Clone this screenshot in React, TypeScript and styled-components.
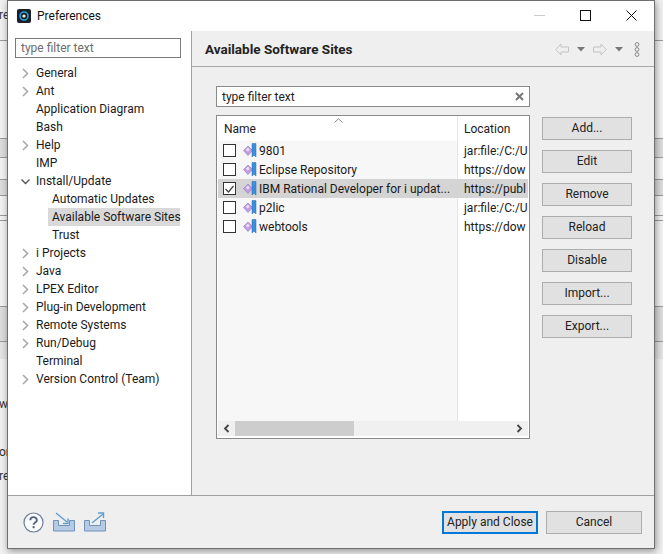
import React from "react";
import styled, { createGlobalStyle } from "styled-components";

const GlobalStyle = createGlobalStyle`
  html, body {
    margin: 0;
    padding: 0;
    background: #f0f0f0;
    overflow: hidden;
  }
  body {
    font-family: Roboto, "Noto Sans", sans-serif;
    font-size: 12px;
    color: #1a1a1a;
  }
`;

const Desktop = styled.div`
  position: relative;
  width: 663px;
  height: 554px;
  overflow: hidden;
  background: #f0f0f0;
`;

const BackdropText = styled.span<{ $top: number }>`
  position: absolute;
  left: -1px;
  top: ${(p) => p.$top}px;
  font-size: 12px;
  color: #333;
`;

const BackdropBand = styled.div<{ $top: number; $height: number; $color: string }>`
  position: absolute;
  left: 0;
  right: 0;
  top: ${(p) => p.$top}px;
  height: ${(p) => p.$height}px;
  background: ${(p) => p.$color};
  border-top: 1px solid #9a9a9a;
`;

const Dialog = styled.div`
  position: absolute;
  left: 7px;
  top: 0;
  width: 646px;
  height: 547px;
  display: flex;
  flex-direction: column;
  background: #efefef;
  border: 1px solid #6f6f6f;
  box-shadow: 1px 2px 7px rgba(0, 0, 0, 0.4);
`;

const TitleBar = styled.div`
  height: 30px;
  flex: none;
  display: flex;
  align-items: center;
  background: #fff;
  padding-left: 9px;
  gap: 6px;
`;

const TitleText = styled.span`
  font-size: 12px;
  color: #111;
`;

const WindowButtons = styled.div`
  margin-left: auto;
  display: flex;
  height: 100%;
  padding-bottom: 2px;
  box-sizing: border-box;
`;

const WindowButton = styled.div`
  width: 46px;
  display: flex;
  align-items: center;
  justify-content: center;
`;

const Body = styled.div`
  flex: 1;
  min-height: 0;
  display: flex;
`;

const Sidebar = styled.div`
  width: 176px;
  flex: none;
  background: #fff;
  border-right: 1px solid #a0a0a0;
  padding: 7px 0 0 7px;
`;

const SidebarFilter = styled.div`
  width: 166px;
  height: 20px;
  box-sizing: border-box;
  border: 1px solid #7a7a7a;
  background: #fff;
  color: #6d6d6d;
  line-height: 18px;
  padding-left: 5px;
  margin-bottom: 6px;
`;

const TreeRow = styled.div<{ $depth?: number }>`
  height: 18px;
  line-height: 18px;
  display: flex;
  align-items: center;
  white-space: nowrap;
  margin-left: ${(p) => (p.$depth ? 33 : 0)}px;
`;

const TreeLabel = styled.span<{ $selected?: boolean; $depth?: number }>`
  display: block;
  flex: ${(p) => (p.$depth ? "none" : "initial")};
  width: ${(p) => (p.$depth ? "132px" : "auto")};
  box-sizing: border-box;
  padding-left: ${(p) => (p.$depth ? 4 : 0)}px;
  background: ${(p) => (p.$selected ? "#d9d9d9" : "transparent")};
`;

const Twisty = styled.span`
  width: 21px;
  flex: none;
  display: flex;
  justify-content: center;
`;

const Main = styled.div`
  flex: 1;
  min-width: 0;
  display: flex;
  flex-direction: column;
`;

const PageHeader = styled.div`
  height: 36px;
  flex: none;
  box-sizing: border-box;
  border-bottom: 1px solid #a8a8a8;
  display: flex;
  align-items: center;
  padding: 1px 14px 0 13px;
`;

const PageTitle = styled.span`
  font-size: 13.5px;
  font-weight: 700;
  color: #222;
  line-height: 18px;
`;

const HeaderTools = styled.div`
  margin-left: auto;
  display: flex;
  align-items: center;
  gap: 8px;
`;

const Content = styled.div`
  flex: 1;
  min-height: 0;
  padding: 19px 0 0 24px;
  display: flex;
  flex-direction: column;
`;

const TableFilter = styled.div`
  width: 314px;
  height: 21px;
  box-sizing: border-box;
  border: 1px solid #8a8a8a;
  background: #fff;
  padding: 0 5px;
  display: flex;
  align-items: center;
  justify-content: space-between;
  color: #222;
  margin-bottom: 8px;
`;

const TableArea = styled.div`
  display: flex;
  gap: 12px;
`;

const Table = styled.div`
  width: 314px;
  height: 324px;
  box-sizing: border-box;
  border: 1px solid #8a8a8a;
  background: #fff;
  display: flex;
  flex-direction: column;
`;

const TableBody = styled.div`
  flex: 1;
  min-height: 0;
  display: grid;
  grid-template-columns: 240px 1fr;
  grid-template-rows: 25px repeat(5, 19px) 1fr;
  overflow: hidden;
`;

const HeaderCell = styled.div<{ $first?: boolean }>`
  position: relative;
  line-height: 26px;
  padding-left: ${(p) => (p.$first ? 7 : 6)}px;
  border-left: ${(p) => (p.$first ? "none" : "1px solid #e6e6e6")};
`;

const SortCaret = styled.svg`
  position: absolute;
  left: 117px;
  top: 2px;
`;

const NameCell = styled.div<{ $selected?: boolean }>`
  display: flex;
  align-items: center;
  padding-left: 5px;
  margin-left: 1px;
  background: ${(p) => (p.$selected ? "#d4d4d4" : "#f7f7f7")};
  white-space: nowrap;
  overflow: hidden;
`;

const LocationCell = styled.div<{ $selected?: boolean }>`
  display: flex;
  align-items: center;
  padding-left: 6px;
  border-left: 1px solid ${(p) => (p.$selected ? "#d4d4d4" : "#e6e6e6")};
  background: ${(p) => (p.$selected ? "#d4d4d4" : "#fff")};
  margin-right: 1px;
  white-space: nowrap;
  overflow: hidden;
`;

const CheckBox = styled.span`
  width: 11px;
  height: 11px;
  flex: none;
  border: 1px solid #333;
  background: #fff;
  margin-right: 7px;
  display: flex;
  align-items: center;
  justify-content: center;
`;

const SiteIconSvg = styled.svg`
  flex: none;
`;

const EmptyName = styled.div`
  margin-left: 1px;
  background: #f7f7f7;
`;

const EmptyLocation = styled.div`
  border-left: 1px solid #e6e6e6;
`;

const ScrollBar = styled.div`
  height: 15px;
  flex: none;
  margin: 0 1px 2px;
  background: #f0f0f0;
  display: flex;
  align-items: center;
  padding: 0 5px 0 0;
`;

const ScrollLeft = styled.span`
  width: 17px;
  display: flex;
  justify-content: center;
`;

const ScrollThumb = styled.div`
  width: 119px;
  height: 15px;
  background: #cdcdcd;
  margin-right: auto;
`;

const ButtonColumn = styled.div`
  display: flex;
  flex-direction: column;
  gap: 10px;
  padding-top: 2px;
`;

const SideButton = styled.div`
  width: 90px;
  height: 23px;
  box-sizing: border-box;
  border: 1px solid #adadad;
  background: #e1e1e1;
  text-align: center;
  line-height: 21px;
  color: #222;
`;

const Footer = styled.div`
  height: 53px;
  flex: none;
  box-sizing: border-box;
  border-top: 1px solid #a0a0a0;
  display: flex;
  align-items: center;
  padding: 0 12px 0 15px;
`;

const FooterIcons = styled.div`
  display: flex;
  align-items: center;
  gap: 9px;
`;

const FooterButtons = styled.div`
  margin-left: auto;
  display: flex;
  gap: 8px;
`;

const FooterButton = styled.div<{ $primary?: boolean }>`
  width: 96px;
  height: 23px;
  box-sizing: border-box;
  border: ${(p) => (p.$primary ? "2px solid #0078d7" : "1px solid #adadad")};
  background: #e1e1e1;
  text-align: center;
  line-height: ${(p) => (p.$primary ? 19 : 21)}px;
  color: #222;
`;

const ChevronRight = () => (
  <svg width="9" height="11" viewBox="0 0 9 11">
    <path d="M2 1l4.5 4.5L2 10" fill="none" stroke="#a9a9a9" strokeWidth="1.6" />
  </svg>
);

const ChevronDown = () => (
  <svg width="11" height="9" viewBox="0 0 11 9">
    <path d="M1.5 2.5L5.5 6.5l4-4" fill="none" stroke="#555" strokeWidth="1.4" />
  </svg>
);

const AppIcon = () => (
  <svg width="14" height="14" viewBox="0 0 14 14">
    <rect width="14" height="14" rx="2" fill="#1b1f27" />
    <circle cx="7" cy="7" r="4" fill="none" stroke="#2a9fd8" strokeWidth="1.6" />
    <circle cx="7" cy="7" r="1.6" fill="#e6f4fb" />
  </svg>
);

const SiteIcon = () => (
  <SiteIconSvg width="16" height="15" viewBox="0 0 16 15">
    <path d="M0.5 7.5L5 3L9.5 7.5L5 12.5Z" fill="#c39be0" stroke="#a27fc4" strokeWidth="0.7" />
    <path d="M2.8 6.8L5 4.6L6.6 6.8L5 8.8Z" fill="#ecdff7" />
    <path d="M9 0.5h4v13.5l-2-1.8l-2 1.8Z" fill="#3d8fdc" stroke="#2a6fb5" strokeWidth="0.5" />
  </SiteIconSvg>
);

const BackArrow = () => (
  <svg width="14" height="13" viewBox="0 0 14 13">
    <path d="M0.8 6.5L6 1v3h7.5v5H6v3Z" fill="none" stroke="#c4c4c4" strokeWidth="1" />
  </svg>
);

const ForwardArrow = () => (
  <svg width="14" height="13" viewBox="0 0 14 13">
    <path d="M13.2 6.5L8 1v3H0.5v5H8v3Z" fill="none" stroke="#c4c4c4" strokeWidth="1" />
  </svg>
);

const SmallCaret = () => (
  <svg width="8" height="5" viewBox="0 0 8 5">
    <path d="M0 0h8L4 4.5Z" fill="#777" />
  </svg>
);

const ViewMenu = () => (
  <svg width="6" height="15" viewBox="0 0 6 15" style={{ marginLeft: 3 }}>
    <circle cx="3" cy="2.5" r="1.9" fill="none" stroke="#888" />
    <circle cx="3" cy="7.5" r="1.9" fill="none" stroke="#888" />
    <circle cx="3" cy="12.5" r="1.9" fill="none" stroke="#888" />
  </svg>
);

const HelpIcon = () => (
  <svg width="21" height="21" viewBox="0 0 21 21">
    <circle cx="10.5" cy="10.5" r="9.5" fill="#fbfbfb" stroke="#6d7f9e" strokeWidth="1.2" />
    <path d="M7.3 8.2c0-4 6.6-4 6.6 0c0 2.4-3.3 2.4-3.3 4.6" fill="none" stroke="#4d5f7e" strokeWidth="1.8" />
    <rect x="9.6" y="14.2" width="2" height="2" fill="#4d5f7e" />
  </svg>
);

const ImportIcon = () => (
  <svg width="22" height="20" viewBox="0 0 22 20">
    <path d="M0.5 8.5h5v5h11v-5h5v10.5H0.5Z" fill="#b6cbe3" stroke="#6f93bd" />
    <path d="M3 1l11 9" stroke="#5d9ecf" strokeWidth="1.4" fill="none" />
    <path d="M15 6.5v5h-5" stroke="#5d9ecf" strokeWidth="1.4" fill="none" />
  </svg>
);

const ExportIcon = () => (
  <svg width="22" height="20" viewBox="0 0 22 20">
    <path d="M0.5 8.5h5v5h11v-5h5v10.5H0.5Z" fill="#b6cbe3" stroke="#6f93bd" />
    <path d="M8 11L19 2" stroke="#5d9ecf" strokeWidth="1.4" fill="none" />
    <path d="M14 1h5.5v5" stroke="#5d9ecf" strokeWidth="1.4" fill="none" />
  </svg>
);

const backdropBands = [
  { top: 40, height: 98, color: "#f2f2f2" },
  { top: 138, height: 19, color: "#dcdcdc" },
  { top: 157, height: 22, color: "#f2f2f2" },
  { top: 179, height: 16, color: "#dcdcdc" },
  { top: 195, height: 20, color: "#f2f2f2" },
  { top: 215, height: 5, color: "#f2f2f2" },
  { top: 220, height: 86, color: "#f2f2f2" },
  { top: 306, height: 35, color: "#dcdcdc" },
  { top: 341, height: 17, color: "#e2e2e2" },
];

const treeItems: { label: string; arrow?: "right" | "down"; depth?: number; selected?: boolean }[] = [
  { label: "General", arrow: "right" },
  { label: "Ant", arrow: "right" },
  { label: "Application Diagram" },
  { label: "Bash" },
  { label: "Help", arrow: "right" },
  { label: "IMP" },
  { label: "Install/Update", arrow: "down" },
  { label: "Automatic Updates", depth: 1 },
  { label: "Available Software Sites", depth: 1, selected: true },
  { label: "Trust", depth: 1 },
  { label: "i Projects", arrow: "right" },
  { label: "Java", arrow: "right" },
  { label: "LPEX Editor", arrow: "right" },
  { label: "Plug-in Development", arrow: "right" },
  { label: "Remote Systems", arrow: "right" },
  { label: "Run/Debug", arrow: "right" },
  { label: "Terminal" },
  { label: "Version Control (Team)", arrow: "right" },
];

const sites = [
  { name: "9801", location: "jar:file:/C:/U" },
  { name: "Eclipse Repository", location: "https://dow" },
  { name: "IBM Rational Developer for i updat...", location: "https://publ", selected: true },
  { name: "p2lic", location: "jar:file:/C:/U" },
  { name: "webtools", location: "https://dow" },
];

const sideButtons = ["Add...", "Edit", "Remove", "Reload", "Disable", "Import...", "Export..."];

function App() {
  return (
    <Desktop>
      <GlobalStyle />
      {backdropBands.map((band) => (
        <BackdropBand key={band.top} $top={band.top} $height={band.height} $color={band.color} />
      ))}
      <BackdropText $top={397}>w</BackdropText>
      <BackdropText $top={445}>or</BackdropText>
      <BackdropText $top={469}>re</BackdropText>
      <BackdropText $top={8}>re</BackdropText>
      <Dialog>
        <TitleBar>
          <AppIcon />
          <TitleText>Preferences</TitleText>
          <WindowButtons>
            <WindowButton>
              <svg width="11" height="11" viewBox="0 0 11 11">
                <path d="M0 5.5h11" stroke="#ccc" />
              </svg>
            </WindowButton>
            <WindowButton>
              <svg width="11" height="11" viewBox="0 0 11 11">
                <rect x="0.5" y="0.5" width="10" height="10" fill="none" stroke="#111" />
              </svg>
            </WindowButton>
            <WindowButton>
              <svg width="11" height="11" viewBox="0 0 11 11">
                <path d="M0.5 0.5l10 10M10.5 0.5l-10 10" stroke="#111" />
              </svg>
            </WindowButton>
          </WindowButtons>
        </TitleBar>
        <Body>
          <Sidebar>
            <SidebarFilter>type filter text</SidebarFilter>
            {treeItems.map((item) => (
              <TreeRow key={item.label} $depth={item.depth}>
                {!item.depth && (
                  <Twisty>
                    {item.arrow === "right" && <ChevronRight />}
                    {item.arrow === "down" && <ChevronDown />}
                  </Twisty>
                )}
                <TreeLabel $selected={item.selected} $depth={item.depth}>
                  {item.label}
                </TreeLabel>
              </TreeRow>
            ))}
          </Sidebar>
          <Main>
            <PageHeader>
              <PageTitle>Available Software Sites</PageTitle>
              <HeaderTools>
                <BackArrow />
                <SmallCaret />
                <ForwardArrow />
                <SmallCaret />
                <ViewMenu />
              </HeaderTools>
            </PageHeader>
            <Content>
              <TableFilter>
                type filter text
                <svg width="9" height="9" viewBox="0 0 9 9">
                  <path d="M1 1l7 7M8 1l-7 7" stroke="#777" strokeWidth="2" />
                </svg>
              </TableFilter>
              <TableArea>
                <Table>
                  <TableBody>
                    <HeaderCell $first>
                      Name
                      <SortCaret width="9" height="5" viewBox="0 0 9 5">
                        <path d="M0.5 4.5L4.5 0.8l4 3.7" fill="none" stroke="#888" />
                      </SortCaret>
                    </HeaderCell>
                    <HeaderCell>Location</HeaderCell>
                    {sites.map((site) => (
                      <React.Fragment key={site.name}>
                        <NameCell $selected={site.selected}>
                          <CheckBox>
                            {site.selected && (
                              <svg width="9" height="8" viewBox="0 0 9 8">
                                <path d="M0.5 4l3 3L8.5 1" fill="none" stroke="#444" strokeWidth="1.2" />
                              </svg>
                            )}
                          </CheckBox>
                          <SiteIcon />
                          {site.name}
                        </NameCell>
                        <LocationCell $selected={site.selected}>{site.location}</LocationCell>
                      </React.Fragment>
                    ))}
                    <EmptyName />
                    <EmptyLocation />
                  </TableBody>
                  <ScrollBar>
                    <ScrollLeft>
                      <svg width="7" height="9" viewBox="0 0 7 9">
                        <path d="M5.5 1L2 4.5L5.5 8" fill="none" stroke="#444" strokeWidth="1.8" />
                      </svg>
                    </ScrollLeft>
                    <ScrollThumb />
                    <svg width="7" height="9" viewBox="0 0 7 9">
                      <path d="M1.5 1L5 4.5L1.5 8" fill="none" stroke="#444" strokeWidth="1.8" />
                    </svg>
                  </ScrollBar>
                </Table>
                <ButtonColumn>
                  {sideButtons.map((b) => (
                    <SideButton key={b}>{b}</SideButton>
                  ))}
                </ButtonColumn>
              </TableArea>
            </Content>
          </Main>
        </Body>
        <Footer>
          <FooterIcons>
            <HelpIcon />
            <ImportIcon />
            <ExportIcon />
          </FooterIcons>
          <FooterButtons>
            <FooterButton $primary>Apply and Close</FooterButton>
            <FooterButton>Cancel</FooterButton>
          </FooterButtons>
        </Footer>
      </Dialog>
    </Desktop>
  );
}

export default App;
